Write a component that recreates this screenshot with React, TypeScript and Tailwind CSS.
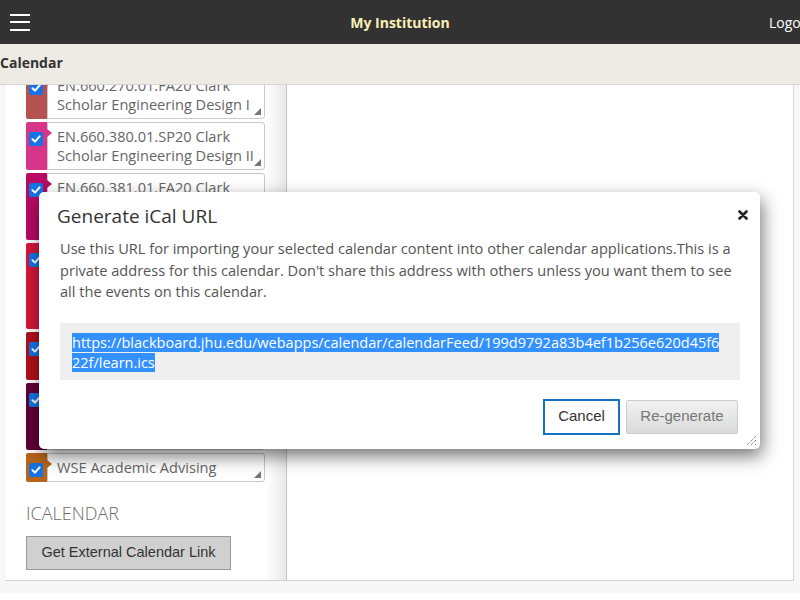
import React from "react";

type Item = { color: string; lines: string[] };

const items: Item[] = [
  { color: "#b5524f", lines: ["EN.660.270.01.FA20 Clark", "Scholar Engineering Design I"] },
  { color: "#d6358a", lines: ["EN.660.380.01.SP20 Clark", "Scholar Engineering Design II"] },
  { color: "#b80a62", lines: ["EN.660.381.01.FA20 Clark", "Scholar Engineering Design", "III"] },
  { color: "#d5163a", lines: ["EN.660.400.01.FA20", "Entrepreneurship and", "Innovation Practicum", "Section 01"] },
  { color: "#b20f1c", lines: ["EN.500.112.01.FA20 Gateway", "Computing: JAVA"] },
  { color: "#5f0035", lines: ["EN.661.110.01.FA20", "Professional Writing and", "Communication"] },
  { color: "#b8651b", lines: ["WSE Academic Advising"] },
];

function CheckBox() {
  return (
    <div className="w-[14px] h-[14px] rounded-[2px] bg-[#1473e6] flex items-center justify-center">
      <svg width="10" height="10" viewBox="0 0 10 10">
        <path d="M1.5 5.2 L4 7.6 L8.6 2.4" fill="none" stroke="white" strokeWidth="2" strokeLinecap="round" strokeLinejoin="round" />
      </svg>
    </div>
  );
}

function CalItem({ item }: { item: Item }) {
  return (
    <div className="relative flex">
      <div className="w-[21px] shrink-0 rounded-l-[2px] pl-[3px] pt-[10px]" style={{ backgroundColor: item.color }}>
        <CheckBox />
      </div>
      <div className="relative flex-1 border border-[#c8c8c8] rounded-r-[3px] bg-white pl-[9px] py-[4px] text-[14.6px] leading-[19px] text-[#666]">
        {item.lines.map((l, i) => (
          <div key={i} className="whitespace-nowrap">{l}</div>
        ))}
        <div className="absolute right-[3px] bottom-[3px] w-0 h-0 border-l-[7px] border-l-transparent border-b-[7px] border-b-[#777]" />
      </div>
      <div
        className="absolute left-[21px] top-[7px] w-0 h-0 border-y-[4px] border-y-transparent border-l-[5px]"
        style={{ borderLeftColor: item.color }}
      />
    </div>
  );
}

export default function App() {
  return (
    <div className="w-[800px] h-[600px] overflow-hidden bg-white relative" style={{ fontFamily: '"Open Sans", "Noto Sans", sans-serif' }}>
      {/* Header */}
      <div className="h-[44px] bg-[#323232] relative flex items-center">
        <div className="ml-[10px] flex flex-col gap-[5.5px]">
          <div className="w-[20px] h-[2px] bg-white" />
          <div className="w-[20px] h-[2px] bg-white" />
          <div className="w-[20px] h-[2px] bg-white" />
        </div>
        <div className="absolute left-0 right-0 top-0 h-[44px] flex items-center justify-center pointer-events-none">
          <span className="text-[14px] font-bold text-[#fbeeb8]">My Institution</span>
        </div>
        <div className="absolute left-[769px] top-0 h-[44px] flex items-center text-[14px] text-white whitespace-nowrap">Logout</div>
      </div>
      {/* Subheader */}
      <div className="h-[41px] bg-[#eeebe4] border-b border-[#d4d4d4] flex items-center">
        <span className="text-[14px] font-bold text-[#333] -mt-[4px]">Calendar</span>
      </div>
      {/* Main */}
      <div className="h-[508px] bg-[#f7f7f7] pl-[6px] pr-[6px]">
        <div className="h-[496px] flex border-b border-[#cfcfcf] bg-white">
          {/* Left column */}
          <div className="w-[280px] shrink-0 overflow-hidden relative">
            <div className="absolute right-0 top-0 bottom-0 w-[21px] bg-gradient-to-r from-white to-[#e9e9e9]" />
            <div className="pl-[20px] pr-[21px] -mt-[14px] flex flex-col gap-[3px] relative">
              {items.map((it, i) => (
                <CalItem key={i} item={it} />
              ))}
            </div>
            <div className="pl-[20px] relative">
              <div className="mt-[19px] text-[18px] leading-[24px] font-light text-[#6b6b6b]">ICALENDAR</div>
              <button
                className="mt-[11px] w-[205px] h-[34px] bg-[#d0d0d0] border border-[#9a9a9a] text-[14.5px] text-[#333]"
                style={{ fontFamily: '"Liberation Sans", Arial, sans-serif' }}
              >
                Get External Calendar Link
              </button>
            </div>
          </div>
          {/* Right column */}
          <div className="flex-1 border-l border-[#c4c4c4] border-r border-r-[#d8d8d8] bg-white" />
        </div>
      </div>

      {/* Modal */}
      <div className="absolute z-20 left-[39px] top-[192px] w-[721px] h-[257px] bg-white rounded-[5px] shadow-[2px_7px_18px_rgba(0,0,0,0.55)]">
        <div className="flex items-start justify-between pl-[18px] pr-[12px] pt-[12px]">
          <div className="text-[19px] leading-[24px] text-[#333]">Generate iCal URL</div>
          <svg width="10" height="10" viewBox="0 0 10 10" className="mt-[6px]">
            <path d="M1.5 1.5 L8.5 8.5 M8.5 1.5 L1.5 8.5" stroke="#222" strokeWidth="2.6" strokeLinecap="round" />
          </svg>
        </div>
        <div className="pl-[21px] pr-[20px] mt-[10px] text-[14.6px] leading-[21.5px] text-[#555]">
          Use this URL for importing your selected calendar content into other calendar applications.This is a private address for this calendar. Don't share this address with others unless you want them to see all the events on this calendar.
        </div>
        <div className="ml-[21px] mr-[20px] mt-[20px] h-[57px] bg-[#efefef] pl-[12px] pt-[10px] text-[14.5px] leading-[20px] text-white whitespace-nowrap">
          <span className="bg-[#3390ff]">https://blackboard.jhu.edu/webapps/calendar/calendarFeed/199d9792a83b4ef1b256e620d45f6</span>
          <br />
          <span className="bg-[#3390ff]">22f/learn.ics</span>
        </div>
        <div className="flex justify-end gap-[6px] pr-[22px] mt-[19px] items-center" style={{ fontFamily: '"Liberation Sans", Arial, sans-serif' }}>
          <button className="w-[77px] h-[36px] bg-white border-2 border-[#1273c6] text-[15px] text-[#333]">Cancel</button>
          <button className="w-[112px] h-[34px] bg-gradient-to-b from-[#f2f2f2] to-[#dadada] border border-[#cccccc] rounded-[2px] text-[15px] text-[#777]">Re-generate</button>
        </div>
        <svg width="12" height="12" viewBox="0 0 12 12" className="absolute right-[3px] bottom-[3px]">
          <path d="M11 2 L2 11 M11 6 L6 11 M11 10 L10 11" stroke="#555" strokeWidth="1" strokeDasharray="1 1" />
        </svg>
      </div>
    </div>
  );
}
